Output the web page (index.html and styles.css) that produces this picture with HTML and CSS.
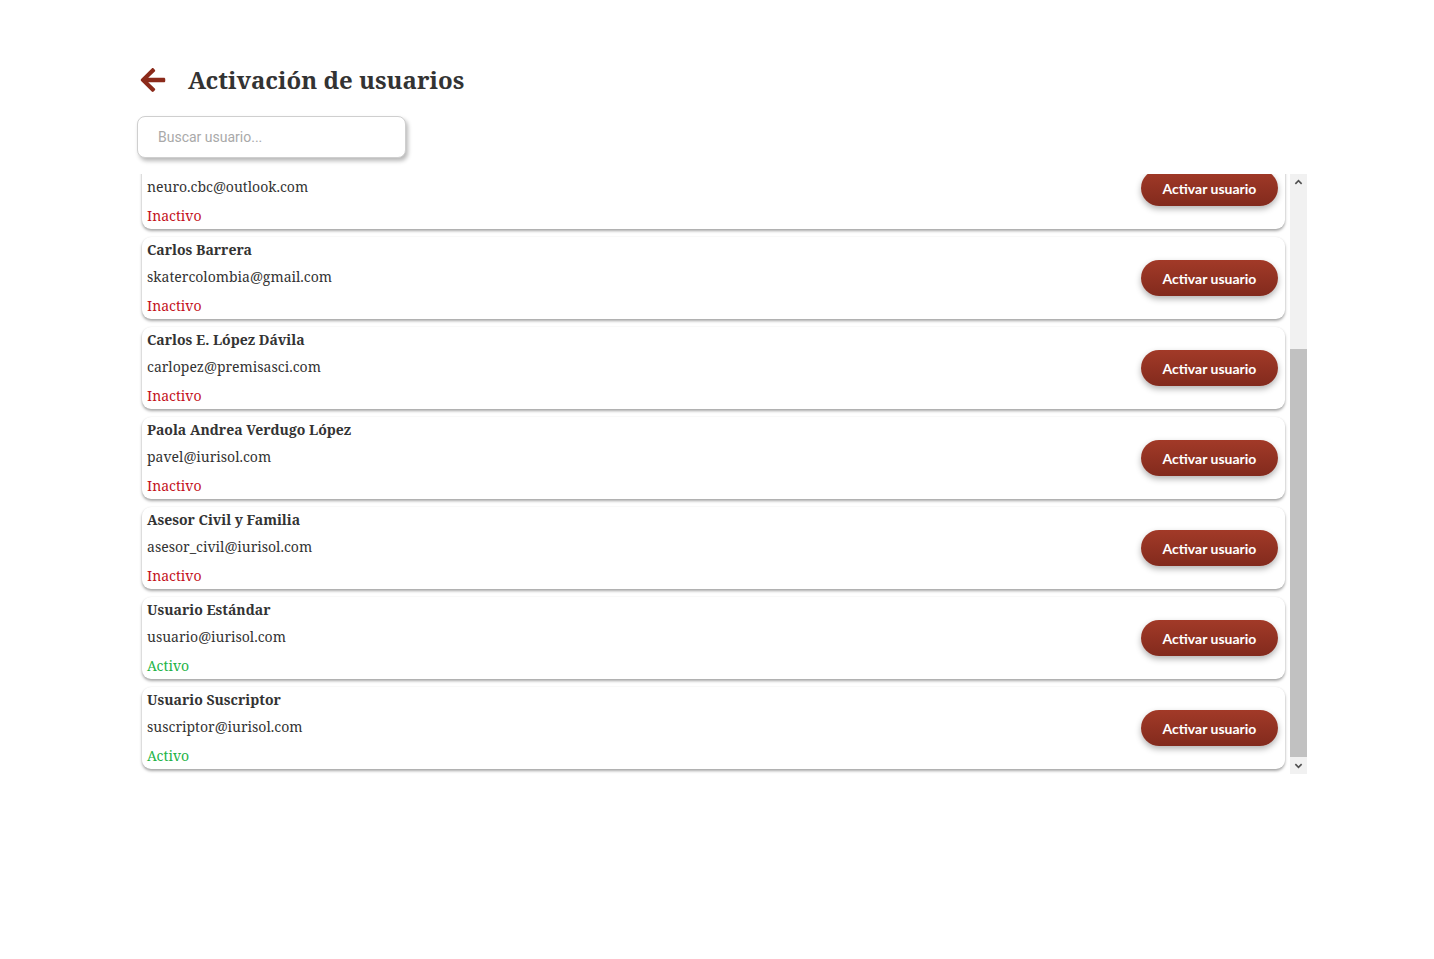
FILE: index.html
```html
<!DOCTYPE html>
<html lang="es">
<head>
<meta charset="utf-8">
<title>Activación de usuarios</title>
<link rel="stylesheet" href="styles.css">
</head>
<body>
<main class="page">
  <header class="page-header">
    <a class="back" href="#" aria-label="Volver">
      <svg viewBox="0 0 448 512" width="28" height="28"><path fill="currentColor" d="M257.5 445.1l-22.2 22.2c-9.4 9.4-24.6 9.4-33.9 0L7 273c-9.4-9.4-9.4-24.6 0-33.9L201.4 44.7c9.4-9.4 24.6-9.4 33.9 0l22.2 22.2c9.5 9.5 9.3 25-.4 34.3L136.6 216H424c13.3 0 24 10.7 24 24v32c0 13.3-10.7 24-24 24H136.6l120.5 114.8c9.8 9.3 10 24.8.4 34.3z"/></svg>
    </a>
    <h1 class="title">Activación de usuarios</h1>
  </header>
  <input class="search" type="text" placeholder="Buscar usuario...">
  <div class="list-wrap">
    <div class="list">
      <div class="list-inner">
        <div class="card">
          <div class="info">
            <div class="name">Neuro CBC</div>
            <div class="email">neuro.cbc@outlook.com</div>
            <div class="status inactive">Inactivo</div>
          </div>
          <button class="btn">Activar usuario</button>
        </div>
        <div class="card">
          <div class="info">
            <div class="name">Carlos Barrera</div>
            <div class="email">skatercolombia@gmail.com</div>
            <div class="status inactive">Inactivo</div>
          </div>
          <button class="btn">Activar usuario</button>
        </div>
        <div class="card">
          <div class="info">
            <div class="name">Carlos E. López Dávila</div>
            <div class="email">carlopez@premisasci.com</div>
            <div class="status inactive">Inactivo</div>
          </div>
          <button class="btn">Activar usuario</button>
        </div>
        <div class="card">
          <div class="info">
            <div class="name">Paola Andrea Verdugo López</div>
            <div class="email">pavel@iurisol.com</div>
            <div class="status inactive">Inactivo</div>
          </div>
          <button class="btn">Activar usuario</button>
        </div>
        <div class="card">
          <div class="info">
            <div class="name">Asesor Civil y Familia</div>
            <div class="email">asesor_civil@iurisol.com</div>
            <div class="status inactive">Inactivo</div>
          </div>
          <button class="btn">Activar usuario</button>
        </div>
        <div class="card">
          <div class="info">
            <div class="name">Usuario Estándar</div>
            <div class="email">usuario@iurisol.com</div>
            <div class="status active">Activo</div>
          </div>
          <button class="btn">Activar usuario</button>
        </div>
        <div class="card">
          <div class="info">
            <div class="name">Usuario Suscriptor</div>
            <div class="email">suscriptor@iurisol.com</div>
            <div class="status active">Activo</div>
          </div>
          <button class="btn">Activar usuario</button>
        </div>
      </div>
    </div>
    <div class="scrollbar" aria-hidden="true">
      <div class="sb-btn">
        <svg viewBox="0 0 10 10" width="9" height="9"><path d="M1.5 6.5 L5 3 L8.5 6.5" fill="none" stroke="#505050" stroke-width="1.8"/></svg>
      </div>
      <div class="sb-track">
        <div class="sb-thumb"></div>
      </div>
      <div class="sb-btn">
        <svg viewBox="0 0 10 10" width="9" height="9"><path d="M1.5 3.5 L5 7 L8.5 3.5" fill="none" stroke="#505050" stroke-width="1.8"/></svg>
      </div>
    </div>
  </div>
</main>
</body>
</html>
```
FILE: styles.css
```css
* { box-sizing: border-box; }
html, body { margin: 0; padding: 0; background: #fff; }
body {
  font-family: "Noto Serif", "DejaVu Serif", "Liberation Serif", serif;
  color: #333;
}
.page {
  width: 1170px;
  margin-left: 137px;
  padding-top: 60px;
}
.page-header {
  display: flex;
  align-items: center;
  gap: 21px;
  height: 40px;
  padding-left: 2px;
}
.back {
  color: #8b2a1a;
  display: flex;
  align-items: center;
}
.title {
  margin: 0;
  font-size: 24px;
  font-weight: 700;
  color: #333;
  position: relative;
  top: -1px;
}
.search {
  display: block;
  margin-top: 16px;
  width: 269px;
  height: 42px;
  border: 1px solid #cfcfcf;
  border-radius: 8px;
  padding: 0 20px;
  font-family: Roboto, "Noto Sans", sans-serif;
  font-size: 14px;
  color: #555;
  background: #fff;
  box-shadow: 2px 3px 4px rgba(0,0,0,0.28);
  outline: none;
}
.search::placeholder { color: #a9a9a9; }
.list-wrap {
  margin-top: 16px;
  height: 600px;
  display: flex;
}
.list {
  flex: 1;
  min-width: 0;
  overflow: hidden;
  display: flex;
  flex-direction: column-reverse;
}
.list-inner {
  display: flex;
  flex-direction: column;
  gap: 8px;
  padding: 5px;
}
.scrollbar {
  width: 17px;
  flex: none;
  display: flex;
  flex-direction: column;
  background: #f1f1f1;
}
.sb-btn {
  height: 17px;
  display: flex;
  align-items: center;
  justify-content: center;
}
.sb-btn svg { display: block; }
.sb-track {
  flex: 1;
  display: flex;
  flex-direction: column;
  justify-content: flex-end;
}
.sb-thumb {
  height: 408px;
  background: #c1c1c1;
}
.card {
  display: flex;
  align-items: center;
  justify-content: space-between;
  min-height: 82px;
  padding: 0 7px 0 5px;
  background: #fff;
  border-radius: 9px;
  box-shadow: 0 2px 3px rgba(0,0,0,0.35), 0 0 2px rgba(0,0,0,0.06);
}
.info {
  display: flex;
  flex-direction: column;
  font-size: 14px;
  line-height: 20px;
}
.name { font-weight: 700; }
.email { margin-top: 7px; }
.status { margin-top: 9px; }
.inactive { color: #c4121b; }
.active { color: #22b346; }
.btn {
  font-family: Lato, "Open Sans", sans-serif;
  font-weight: 700;
  font-size: 14px;
  color: #fff;
  width: 137px;
  height: 36px;
  border: none;
  border-radius: 18px;
  background: linear-gradient(#a23a28, #822a1d);
  box-shadow: 0 3px 6px rgba(0,0,0,0.3);
  cursor: pointer;
}
```
